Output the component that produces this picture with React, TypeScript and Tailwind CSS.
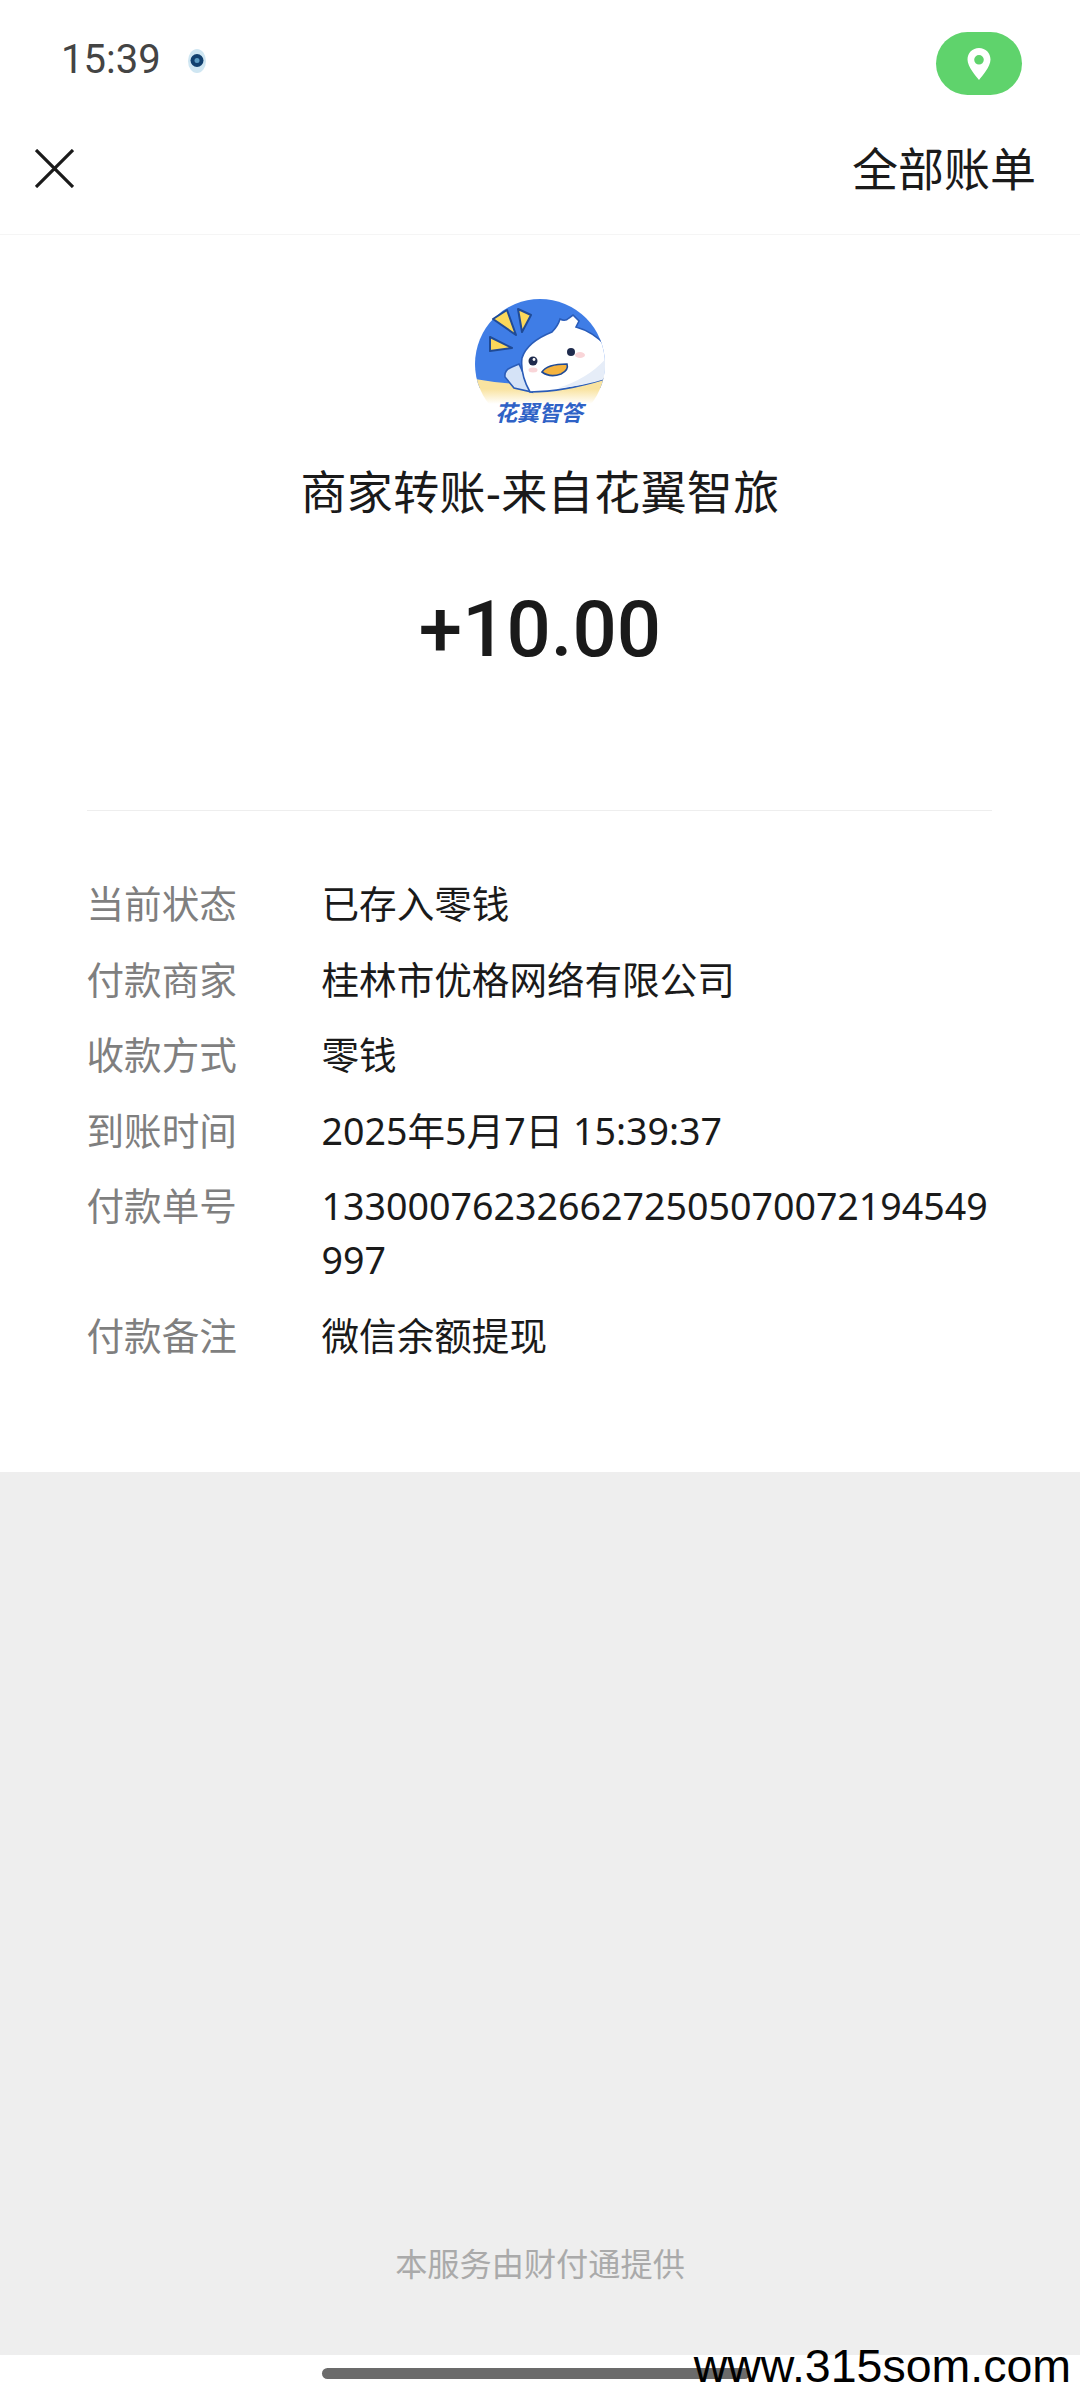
import React from 'react';

const FONT = "font-['Noto_Sans','Noto_Sans_CJK_SC',sans-serif]";

const rows = [
  { label: '当前状态', value: '已存入零钱' },
  { label: '付款商家', value: '桂林市优格网络有限公司' },
  { label: '收款方式', value: '零钱' },
  { label: '到账时间', value: '2025年5月7日 15:39:37' },
  { label: '付款单号', value: '1330007623266272505070072194549997' },
  { label: '付款备注', value: '微信余额提现' },
];

const Logo = () => (
  <svg viewBox="0 0 200 160" className="w-[200px] h-[160px] block">
    <defs>
      <clipPath id="disc">
        <circle cx="100" cy="84" r="65" />
      </clipPath>
      <linearGradient id="sand" x1="0" y1="0" x2="0" y2="1">
        <stop offset="0.5" stopColor="#f9e3a0" />
        <stop offset="1" stopColor="#ffffff" />
      </linearGradient>
    </defs>
    <g clipPath="url(#disc)">
      <rect x="30" y="18" width="140" height="90" fill="#3f7de6" />
      <path d="M30 98 Q100 112 170 94 V124 H30 Z" fill="url(#sand)" />
      {/* wing */}
      <path d="M65 97 Q64 90 72 87 L79 84 L92 112 L74 108 Z" fill="#d5e3f7" stroke="#2a5cb8" strokeWidth="1.6" />
      {/* head */}
      <path
        d="M90 112 Q80 94 82 78 Q87 62 112 52 Q118 46 120 39 Q125 42 129 38 L133 35 L139 41 L136 47 Q154 52 168 68 V98 Q125 112 90 112 Z"
        fill="#ffffff"
        stroke="#2a5cb8"
        strokeWidth="1.6"
      />
      <path d="M118 108 Q150 98 168 76 V98 Q145 106 118 108 Z" fill="#e6edf8" />
    </g>
    {/* sparks */}
    <path d="M53 39 L67 30 L76 55 Z" fill="#fbd85a" stroke="#1f4a96" strokeWidth="2" strokeLinejoin="round" />
    <path d="M78 29 L91 35 L82 52 Z" fill="#fbd85a" stroke="#1f4a96" strokeWidth="2" strokeLinejoin="round" />
    <path d="M50 57 L72 68 L50 71 Z" fill="#fbd85a" stroke="#1f4a96" strokeWidth="2" strokeLinejoin="round" />
    {/* face */}
    <circle cx="93" cy="81" r="4.5" fill="#1f2b4d" />
    <circle cx="94" cy="79.5" r="1.4" fill="#ffffff" />
    <circle cx="131" cy="72" r="4" fill="#1f2b4d" />
    <ellipse cx="93" cy="90" rx="4.5" ry="2.5" fill="#f9d5d8" />
    <ellipse cx="140" cy="75" rx="5" ry="3" fill="#f9d5d8" />
    <path d="M102 92 Q107 84 127 84 Q129 90 121 94 Q110 98 102 92 Z" fill="#f4b33f" stroke="#1f4a96" strokeWidth="1.6" />
    <text
      x="99"
      y="141"
      textAnchor="middle"
      fontSize="22"
      fontWeight="700"
      fontStyle="italic"
      fill="#2f62c6"
      fontFamily="'Noto Sans CJK SC', sans-serif"
    >
      花翼智答
    </text>
  </svg>
);

export default function App() {
  return (
    <div className={`relative w-[1080px] h-[2400px] flex flex-col bg-white text-[#1a1a1a] ${FONT}`}>
      {/* status bar */}
      <div className="h-[120px] shrink-0 flex justify-between pl-[61px] pr-[58px]">
        <div className="flex items-center h-[120px] gap-[26px]">
          <span className="font-['Roboto',sans-serif] text-[40px] leading-none text-[#444444]">15:39</span>
          <svg width="20" height="26" viewBox="0 0 20 26" className="mt-[2px]">
            <ellipse cx="10" cy="13" rx="9" ry="12" fill="#cfe6f2" />
            <circle cx="10" cy="12.5" r="6.5" fill="#12406f" />
            <circle cx="10" cy="12.5" r="2.5" fill="#5d9cc4" />
          </svg>
        </div>
        <div className="mt-[32px] w-[86px] h-[63px] rounded-full bg-[#5fd36c] flex items-center justify-center">
          <svg width="24" height="32" viewBox="0 0 24 32">
            <path
              fillRule="evenodd"
              d="M12 0C5.4 0 0.5 5 0.5 11.5 0.5 19 9 28 12 32 15 28 23.5 19 23.5 11.5 23.5 5 18.6 0 12 0ZM12 7A4.8 4.8 0 1 1 12 16.6 4.8 4.8 0 0 1 12 7Z"
              fill="#ffffff"
            />
          </svg>
        </div>
      </div>

      {/* nav bar */}
      <div className="h-[115px] shrink-0 flex items-center justify-between pl-[35px] pr-[44px] pb-[18px] border-b border-[#f5f5f5]">
        <svg width="39" height="39" viewBox="0 0 39 39" fill="none" stroke="#1a1a1a" strokeWidth="3.2">
          <path d="M1 1 L38 38 M38 1 L1 38" />
        </svg>
        <span className="text-[46px] leading-[56px]">全部账单</span>
      </div>

      {/* bill detail */}
      <div className="shrink-0 flex flex-col items-center pt-[45px] pb-[109.5px]">
        <Logo />
        <div className="mt-[23px] text-[46px] leading-[56px] tracking-[0.4px]">商家转账-来自花翼智旅</div>
        <div className="mt-[61px] font-['Roboto',sans-serif] font-medium text-[78px] leading-[100px]">+10.00</div>
        <div className="mt-[130px] w-[905px] -translate-x-[1px] h-px bg-[#eeeeee]" />
        <div className="mt-[66px] w-[907px] flex flex-col gap-[21.5px]">
          {rows.map((row) => (
            <div key={row.label} className="flex text-[37.6px] leading-[54px]">
              <div className="w-[235px] shrink-0 text-[#7f7f7f]">{row.label}</div>
              <div className="flex-1 break-all">{row.value}</div>
            </div>
          ))}
        </div>
      </div>

      {/* footer */}
      <div className="flex-1 bg-[#eeeeee] flex items-end justify-center pb-[69px]">
        <span className="text-[32.2px] leading-[44px] text-[#aaaaaa]">本服务由财付通提供</span>
      </div>

      {/* home indicator */}
      <div className="h-[45px] shrink-0 pt-[13px] pl-[322px]">
        <div className="w-[428px] h-[11px] rounded-full bg-[#6b6b6b]" />
      </div>

      {/* watermark */}
      <div className="absolute right-[9px] bottom-[11px] font-['Liberation_Sans',sans-serif] text-[46.5px] leading-none text-black">
        www.315som.com
      </div>
    </div>
  );
}
